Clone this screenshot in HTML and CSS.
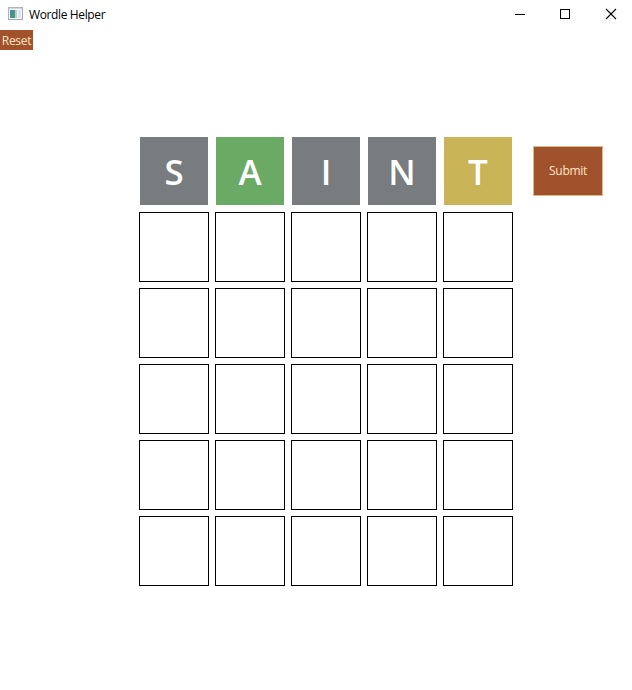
FILE: index.html
```html
<!DOCTYPE html>
<html lang="en">
<head>
<meta charset="utf-8">
<title>Wordle Helper</title>
<link rel="stylesheet" href="styles.css">
</head>
<body>
<header class="titlebar">
  <svg class="app-icon" width="16" height="14" viewBox="0 0 16 14">
    <defs>
      <linearGradient id="pane" x1="0" y1="0" x2="1" y2="1">
        <stop offset="0" stop-color="#4b85ae"/>
        <stop offset="1" stop-color="#45a36c"/>
      </linearGradient>
    </defs>
    <rect x="0.5" y="0.5" width="14" height="12" fill="#f5f6f8" stroke="#b0b5bc"/>
    <path d="M1 1.5h13" stroke="#d4d9df"/>
    <rect x="2" y="3" width="5" height="8" fill="url(#pane)"/>
    <rect x="7" y="3" width="2" height="8" fill="#b5cfd3"/>
    <rect x="10" y="3" width="3" height="8" fill="#e1e4e8"/>
    <path d="M0 12.5h15M14.5 1v12" stroke="#a3a8af"/>
  </svg>
  <h1 class="title">Wordle Helper</h1>
  <nav class="controls">
    <svg width="46" height="30" viewBox="0 0 46 30"><path d="M16 14.5h10" stroke="#000"/></svg>
    <svg width="46" height="30" viewBox="0 0 46 30"><rect x="15.5" y="9.5" width="9" height="9" fill="none" stroke="#000"/></svg>
    <svg width="46" height="30" viewBox="0 0 46 30"><path d="M15 9l10 10M25 9l-10 10" stroke="#000" stroke-width="1.1"/></svg>
  </nav>
</header>
<button class="button reset">Reset</button>
<main class="game">
  <div class="board">
    <div class="tile absent">S</div><div class="tile correct">A</div><div class="tile absent">I</div><div class="tile absent">N</div><div class="tile present">T</div>
    <div class="tile"></div><div class="tile"></div><div class="tile"></div><div class="tile"></div><div class="tile"></div>
    <div class="tile"></div><div class="tile"></div><div class="tile"></div><div class="tile"></div><div class="tile"></div>
    <div class="tile"></div><div class="tile"></div><div class="tile"></div><div class="tile"></div><div class="tile"></div>
    <div class="tile"></div><div class="tile"></div><div class="tile"></div><div class="tile"></div><div class="tile"></div>
    <div class="tile"></div><div class="tile"></div><div class="tile"></div><div class="tile"></div><div class="tile"></div>
  </div>
  <button class="button submit">Submit</button>
</main>
</body>
</html>
```
FILE: styles.css
```css
* {
  box-sizing: border-box;
}

body {
  margin: 0;
  height: 690px;
  overflow: hidden;
  background: #fff;
  color: #000;
  font-family: "Open Sans", "Noto Sans", sans-serif;
  font-size: 12px;
}

.titlebar {
  display: flex;
  height: 30px;
  padding-left: 8px;
}

.app-icon {
  margin-top: 7px;
}

.title {
  margin: 0 0 0 5px;
  font-size: 12px;
  font-weight: 400;
  line-height: 30px;
  letter-spacing: -0.37px;
}

.controls {
  display: flex;
  margin-left: auto;
  margin-right: -5px;
}

.button {
  display: block;
  padding: 0;
  border: 0;
  background: #a0522d;
  color: #ffe4c4;
  font: inherit;
  text-align: center;
}

.reset {
  width: 33px;
  height: 20px;
  padding-top: 1px;
  line-height: 19px;
  letter-spacing: -0.3px;
}

.game {
  display: flex;
  align-items: flex-start;
  gap: 20px;
  padding: 86px 0 0 139px;
}

.board {
  display: grid;
  grid-template-columns: repeat(5, 70px);
  grid-auto-rows: 70px;
  gap: 6px;
}

.tile {
  border: 1px solid #000;
  color: #fff;
  font-size: 35px;
  font-weight: 650;
  line-height: 70px;
  text-align: center;
}

.absent,
.correct,
.present {
  border-color: #fff;
}

.absent {
  background: #787c7e;
  background-clip: padding-box;
}

.correct {
  background: #6aaa64;
  background-clip: padding-box;
}

.present {
  background: #c9b458;
  background-clip: padding-box;
}

.submit {
  width: 70px;
  height: 50px;
  margin-top: 10px;
  border: 1px solid #deb887;
  line-height: 48px;
  letter-spacing: -0.3px;
}
```
